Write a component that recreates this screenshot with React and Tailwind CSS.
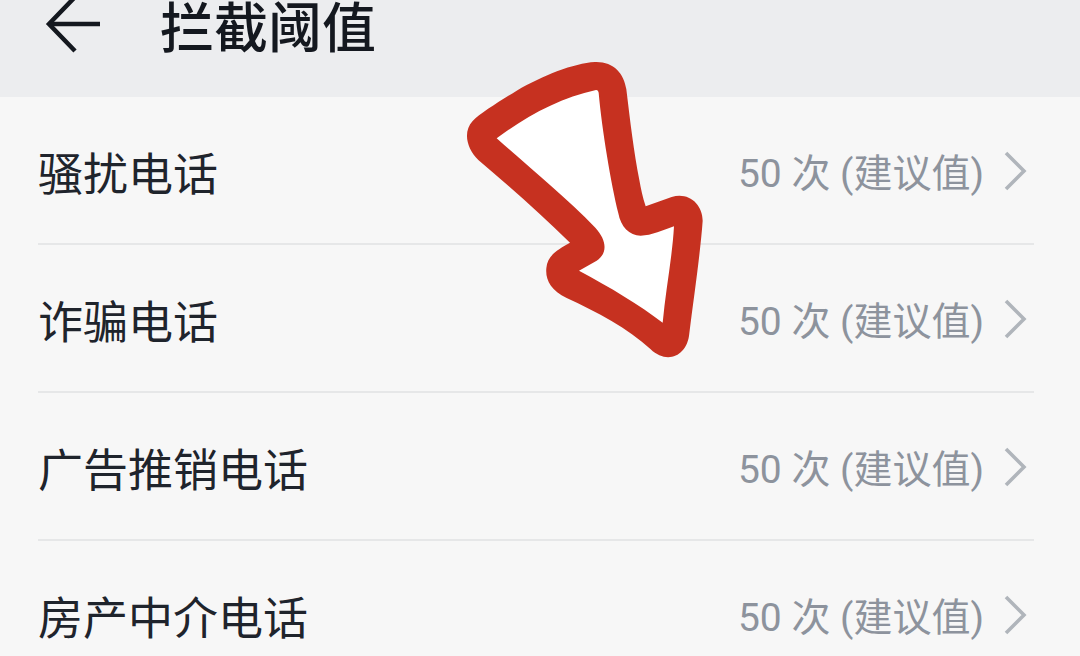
import React from 'react';

const rows = [
  { id: 'harass', label: '骚扰电话', count: 50 },
  { id: 'fraud', label: '诈骗电话', count: 50 },
  { id: 'ads', label: '广告推销电话', count: 50 },
  { id: 'estate', label: '房产中介电话', count: 50 },
];

const BackIcon = () => (
  <svg className="block" width="56" height="54" viewBox="0 0 56 54" fill="none" stroke="#14181f" aria-hidden="true">
    <path d="M30 -3L4 24L30 51" strokeWidth="4.5" />
    <path d="M4 24H55" strokeWidth="4.5" />
  </svg>
);

const ChevronIcon = () => (
  <svg className="block shrink-0" width="24" height="42" viewBox="0 0 24 42" fill="none" stroke="#b0b5bb" aria-hidden="true">
    <path d="M2 2L20 20L2 38" strokeWidth="3.6" />
  </svg>
);

// Hand-drawn pointer lying over the list
const PointerArrow = () => (
  <svg
    className="pointer-events-none absolute left-[450px] top-[50px]"
    width="270"
    height="320"
    viewBox="0 0 810 960"
    aria-hidden="true"
  >
    <path
      fill="#c63120"
      d="M68 213C90 190 150 153 200 122C280 76 370 40 435 36C490 34 522 70 529 118C540 210 552 310 568 390C573 418 578 442 587 469L665 441C715 425 758 462 758 512C752 600 732 740 718 850C712 920 650 944 602 898C535 836 440 785 350 744C302 720 286 690 289 655C292 615 325 598 360 578C270 490 175 406 85 330C50 296 38 245 68 213Z"
    />
    <path
      fill="#ffffff"
      d="M140 265C230 198 330 143 438 120Q445 119 446 128C456 240 483 400 505 490C512 530 538 557 572 557C605 557 640 540 672 529C667 620 647 720 638 818C570 765 480 712 387 662L440 632C474 610 470 570 436 533C345 440 245 358 140 265Z"
    />
  </svg>
);

const SettingRow = ({ label, count }) => (
  <li className="group border-b-2 border-[#e6e7e8] last:border-b-0">
    <button
      type="button"
      className="flex w-full items-center justify-between pb-10 pt-[52px] text-left group-last:pb-2"
    >
      <span className="text-[45px] leading-[54px] text-[#1f242c]">{label}</span>
      <span className="flex items-center gap-5 pb-1 pr-1.5">
        <span className="text-[39px] leading-[50px] text-[#8d939d]">{count} 次 (建议值)</span>
        <span className="pb-1">
          <ChevronIcon />
        </span>
      </span>
    </button>
  </li>
);

const App = () => {
  return (
    <div className="relative min-h-screen bg-[#f7f7f7] font-[Roboto,'Noto_Sans_CJK_SC',sans-serif]">
      {/* Header */}
      <header className="flex items-start gap-[59px] bg-[#ecedef] pb-[37px] pl-[45px]">
        <button type="button" aria-label="返回">
          <BackIcon />
        </button>
        <h1 className="text-[54px] font-medium leading-[60px] text-[#14181f]">拦截阈值</h1>
      </header>

      {/* Threshold list */}
      <ul className="pl-[38px] pr-[46px]">
        {rows.map((row) => (
          <SettingRow key={row.id} label={row.label} count={row.count} />
        ))}
      </ul>

      <PointerArrow />
    </div>
  );
};

export default App;
